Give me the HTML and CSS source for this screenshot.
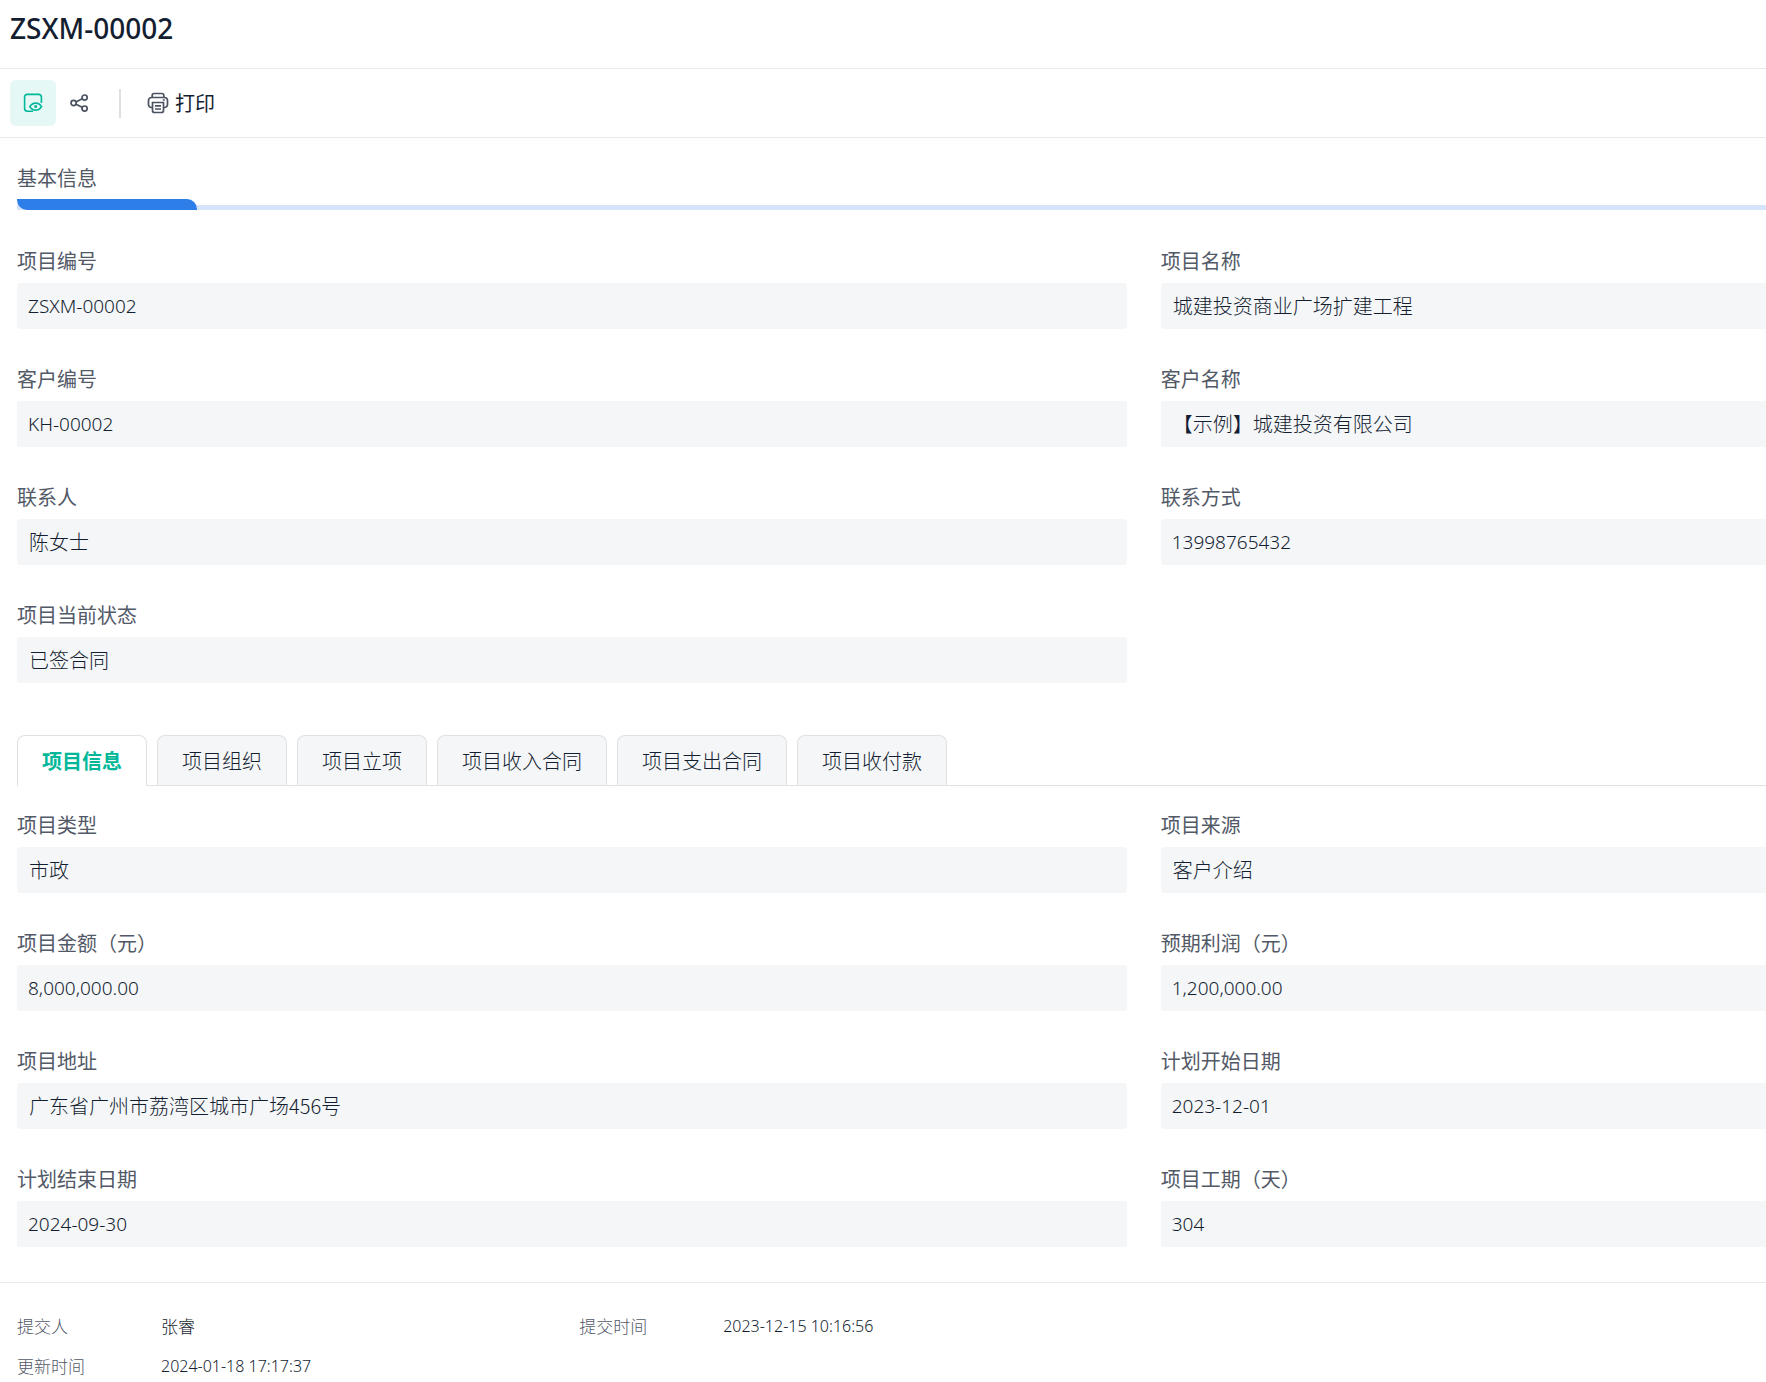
FILE: index.html
```html
<!DOCTYPE html>
<html lang="zh-CN">
<head>
    <meta charset="UTF-8">
    <meta name="viewport" content="width=device-width, initial-scale=1.0">
    <title>ZSXM-00002</title>
    <link rel="stylesheet" href="styles.css">
</head>
<body>
    <header class="header">
        <h1>ZSXM-00002</h1>
    </header>

    <div class="toolbar">
        <button type="button" class="tool active" aria-label="查看">
            <svg width="20" height="20" viewBox="0 0 20 20" fill="none" stroke="currentColor" stroke-width="1.6">
                <path d="M10 18.2H4.2a2.6 2.6 0 0 1-2.6-2.6V4a2.6 2.6 0 0 1 2.6-2.6h11.6A2.6 2.6 0 0 1 18.4 4v6"/>
                <path d="M6.8 13.6c1.4-2.3 3.4-3.5 5.9-3.5s4.5 1.2 5.9 3.5c-1.4 2.3-3.4 3.5-5.9 3.5s-4.5-1.2-5.9-3.5z"/>
                <circle cx="12.7" cy="13.6" r="1.5" fill="currentColor" stroke="none"/>
            </svg>
        </button>
        <button type="button" class="tool" aria-label="分享">
            <svg width="20" height="20" viewBox="0 0 20 20" fill="none" stroke="currentColor" stroke-width="1.7">
                <circle cx="4.6" cy="10" r="2.6"/>
                <circle cx="15.6" cy="4.6" r="2.6"/>
                <circle cx="15.6" cy="15.6" r="2.6"/>
                <path d="M7 8.9l6.200-3.100M7 11.200l6.200 3.100"/>
            </svg>
        </button>
        <span class="divider"></span>
        <button type="button" class="print">
            <svg width="22" height="22" viewBox="0 0 22 22" fill="none" stroke="currentColor" stroke-width="1.7">
                <path d="M5.200 5.500V3.500a2 2 0 0 1 2-2h7.600a2 2 0 0 1 2 2v2"/>
                <path d="M5.500 15.500H4.500a3 3 0 0 1-3-3v-4a3 3 0 0 1 3-3h13a3 3 0 0 1 3 3v4a3 3 0 0 1-3 3h-1"/>
                <path d="M5.500 10.500h11v8a2 2 0 0 1-2 2h-7a2 2 0 0 1-2-2z"/>
                <path d="M8 13.800h6M8 17h6M15.800 8h2"/>
            </svg>
            打印
        </button>
    </div>

    <main class="content">
        <h2 class="section-title">基本信息</h2>
        <div class="section-bar"></div>

        <form class="fields">
            <div class="item">
                <label for="code">项目编号</label>
                <input class="num" type="text" id="code" value="ZSXM-00002" readonly>
            </div>
            <div class="item">
                <label for="name">项目名称</label>
                <input type="text" id="name" value="城建投资商业广场扩建工程" readonly>
            </div>
            <div class="item">
                <label for="customerCode">客户编号</label>
                <input class="num" type="text" id="customerCode" value="KH-00002" readonly>
            </div>
            <div class="item">
                <label for="customerName">客户名称</label>
                <input type="text" id="customerName" value="【示例】城建投资有限公司" readonly>
            </div>
            <div class="item">
                <label for="contact">联系人</label>
                <input type="text" id="contact" value="陈女士" readonly>
            </div>
            <div class="item">
                <label for="phone">联系方式</label>
                <input class="num" type="text" id="phone" value="13998765432" readonly>
            </div>
            <div class="item">
                <label for="status">项目当前状态</label>
                <input type="text" id="status" value="已签合同" readonly>
            </div>
        </form>

        <div class="tabs" role="tablist">
            <button type="button" role="tab" class="tab active" aria-selected="true">项目信息</button>
            <button type="button" role="tab" class="tab">项目组织</button>
            <button type="button" role="tab" class="tab">项目立项</button>
            <button type="button" role="tab" class="tab">项目收入合同</button>
            <button type="button" role="tab" class="tab">项目支出合同</button>
            <button type="button" role="tab" class="tab">项目收付款</button>
        </div>

        <form class="fields">
            <div class="item">
                <label for="type">项目类型</label>
                <input type="text" id="type" value="市政" readonly>
            </div>
            <div class="item">
                <label for="source">项目来源</label>
                <input type="text" id="source" value="客户介绍" readonly>
            </div>
            <div class="item">
                <label for="amount">项目金额（元）</label>
                <input class="num" type="text" id="amount" value="8,000,000.00" readonly>
            </div>
            <div class="item">
                <label for="profit">预期利润（元）</label>
                <input class="num" type="text" id="profit" value="1,200,000.00" readonly>
            </div>
            <div class="item">
                <label for="address">项目地址</label>
                <input type="text" id="address" value="广东省广州市荔湾区城市广场456号" readonly>
            </div>
            <div class="item">
                <label for="startDate">计划开始日期</label>
                <input class="num" type="text" id="startDate" value="2023-12-01" readonly>
            </div>
            <div class="item">
                <label for="endDate">计划结束日期</label>
                <input class="num" type="text" id="endDate" value="2024-09-30" readonly>
            </div>
            <div class="item">
                <label for="days">项目工期（天）</label>
                <input class="num" type="text" id="days" value="304" readonly>
            </div>
        </form>
    </main>

    <footer>
        <dl class="meta">
            <div class="meta-item"><dt>提交人</dt><dd>张睿</dd></div>
            <div class="meta-item"><dt>提交时间</dt><dd class="date">2023-12-15 10:16:56</dd></div>
            <div class="meta-item"><dt>更新时间</dt><dd class="date">2024-01-18 17:17:37</dd></div>
        </dl>
    </footer>
</body>
</html>
```
FILE: styles.css
```css
* {
    box-sizing: border-box;
}

body {
    margin: 0;
    background: #fff;
    color: #141e31;
    font-family: "Noto Sans CJK SC", sans-serif;
    font-size: 20px;
    line-height: 30px;
}

h1, h2, dl, dd {
    margin: 0;
}

button, input {
    font: inherit;
    color: inherit;
    border: none;
}

button {
    padding: 0;
    background: none;
    cursor: pointer;
}

.header {
    padding: 8px 10px 20px;
    border-bottom: 1px solid #e9e9eb;
}

.header h1 {
    font-family: "Noto Sans", sans-serif;
    font-size: 28px;
    font-weight: 500;
    line-height: 40px;
}

/* toolbar */
.toolbar {
    display: flex;
    align-items: center;
    padding: 11px 10px;
    border-bottom: 1px solid #e9e9eb;
}

.tool {
    display: flex;
    align-items: center;
    justify-content: center;
    width: 46px;
    height: 46px;
    border-radius: 6px;
    color: #4b5362;
}

.tool.active {
    background: #e5f8f5;
    color: #00b899;
}

.divider {
    width: 2px;
    height: 29px;
    margin: 0 26px 0 17px;
    background: #dfdfe1;
}

.print {
    display: flex;
    align-items: center;
    gap: 6px;
}

.print svg {
    color: #4b5362;
}

/* form */
.content {
    padding-left: 17px;
}

.section-title {
    padding: 25px 0 6px;
    font-size: 20px;
    font-weight: 400;
    color: #525967;
}

.section-bar {
    height: 11px;
    margin-bottom: 36px;
    border-bottom: 5px solid #d5e4fb;
}

.section-bar::before {
    content: "";
    display: block;
    width: 180px;
    height: 11px;
    border-radius: 0 10px 0 10px;
    background: #2e7eea;
}

.fields {
    display: grid;
    grid-template-columns: 11fr 6fr;
    gap: 35px 34px;
}

.item label {
    display: block;
    margin-bottom: 7px;
    color: #525967;
}

.item input {
    display: block;
    width: 100%;
    height: 46px;
    padding: 0 12px 2px;
    border-radius: 3px;
    background: #f4f6f8;
    font-weight: 300;
    outline: none;
}

.item:nth-child(even) input {
    border-radius: 3px 0 0 3px;
}

.item .num {
    padding: 0 11px;
    font-family: "Noto Sans", sans-serif;
    font-size: 19px;
}

/* tabs */
.tabs {
    display: flex;
    gap: 10px;
    margin: 52px 0 24px;
    border-bottom: 1px solid #e0e1e4;
}

.tab {
    height: 50px;
    padding: 0 24px;
    border: 1px solid #e0e1e4;
    border-bottom: none;
    border-radius: 8px 8px 0 0;
    background: #f4f6f8;
    font-weight: 300;
}

.tab.active {
    height: 51px;
    margin-bottom: -1px;
    background: #fff;
    color: #00b899;
    font-weight: 700;
}

/* submit info */
footer {
    margin-top: 35px;
    padding: 31px 0 0 17px;
    border-top: 1px solid #e9e9eb;
}

.meta {
    display: grid;
    grid-template-columns: 9fr 19fr;
    row-gap: 16px;
    font-size: 17px;
    font-weight: 300;
    line-height: 24px;
}

.meta-item {
    display: flex;
}

.meta dt {
    width: 144px;
    color: #525967;
}

.date {
    font-family: "Noto Sans", sans-serif;
    font-size: 16px;
}
```
